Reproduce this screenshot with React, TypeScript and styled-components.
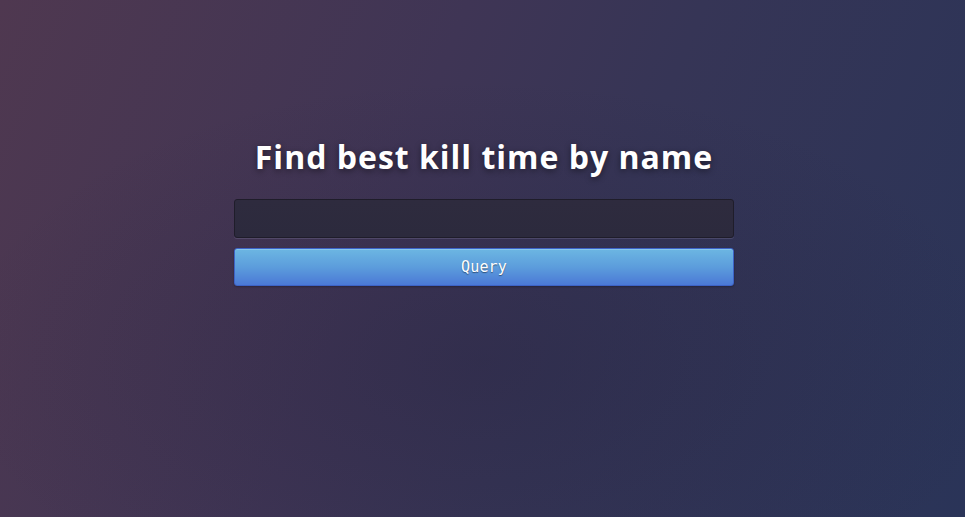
import React from "react";
import styled, { createGlobalStyle } from "styled-components";

const Global = createGlobalStyle`
  html, body { margin: 0; padding: 0; height: 100%; }
  body {
    font-family: "Open Sans", "Noto Sans", sans-serif;
    background: #33304c;
  }
  #root { height: 100%; }
`;

const Page = styled.div`
  min-height: 517px;
  height: 100vh;
  box-sizing: border-box;
  display: flex;
  flex-direction: column;
  align-items: center;
  padding-top: 135px;
  padding-left: 3px;
  background:
    radial-gradient(ellipse 55% 55% at 50% 70%, rgba(30, 28, 55, 0.28), rgba(30, 28, 55, 0) 100%),
    linear-gradient(112deg, #4f3850 0%, #3f3555 40%, #363556 60%, #2a3458 100%);
`;

const Title = styled.h1`
  margin: 0;
  color: #ffffff;
  font-family: "Open Sans", sans-serif;
  font-weight: 700;
  font-size: 32px;
  line-height: 44px;
  letter-spacing: 1px;
  text-shadow: 0 2px 6px rgba(0, 0, 0, 0.45);
`;

const Form = styled.form`
  width: 500px;
  margin-top: 20px;
  display: flex;
  flex-direction: column;
  gap: 10px;
`;

const Input = styled.input`
  box-sizing: border-box;
  width: 100%;
  height: 39px;
  margin: 0;
  border: 1px solid #1f1d2a;
  border-radius: 3px;
  background: linear-gradient(180deg, #2e2b3e, #2c2a3d);
  box-shadow: 0 1px 0 rgba(120, 115, 150, 0.35);
  color: #e6e6ee;
  font-family: "DejaVu Sans Mono", monospace;
  font-size: 14px;
  padding: 0 10px;
  outline: none;
`;

const Button = styled.button`
  box-sizing: border-box;
  width: 100%;
  height: 38px;
  margin: 0;
  border: 1px solid #3d63c6;
  border-radius: 3px;
  background: linear-gradient(180deg, #6cb6e2 0%, #5c9ddc 50%, #4b79d6 100%);
  box-shadow: inset 0 1px 0 rgba(160, 215, 245, 0.5), 0 1px 2px rgba(0, 0, 0, 0.25);
  color: #ffffff;
  font-family: "DejaVu Sans Mono", monospace;
  font-size: 15px;
  letter-spacing: 0.2px;
  text-shadow: 0 1px 1px rgba(0, 0, 0, 0.45);
  cursor: pointer;
`;

export default function App() {
  return (
    <>
      <Global />
      <Page>
        <Title>Find best kill time by name</Title>
        <Form onSubmit={(e) => e.preventDefault()}>
          <Input type="text" />
          <Button type="submit">Query</Button>
        </Form>
      </Page>
    </>
  );
}
